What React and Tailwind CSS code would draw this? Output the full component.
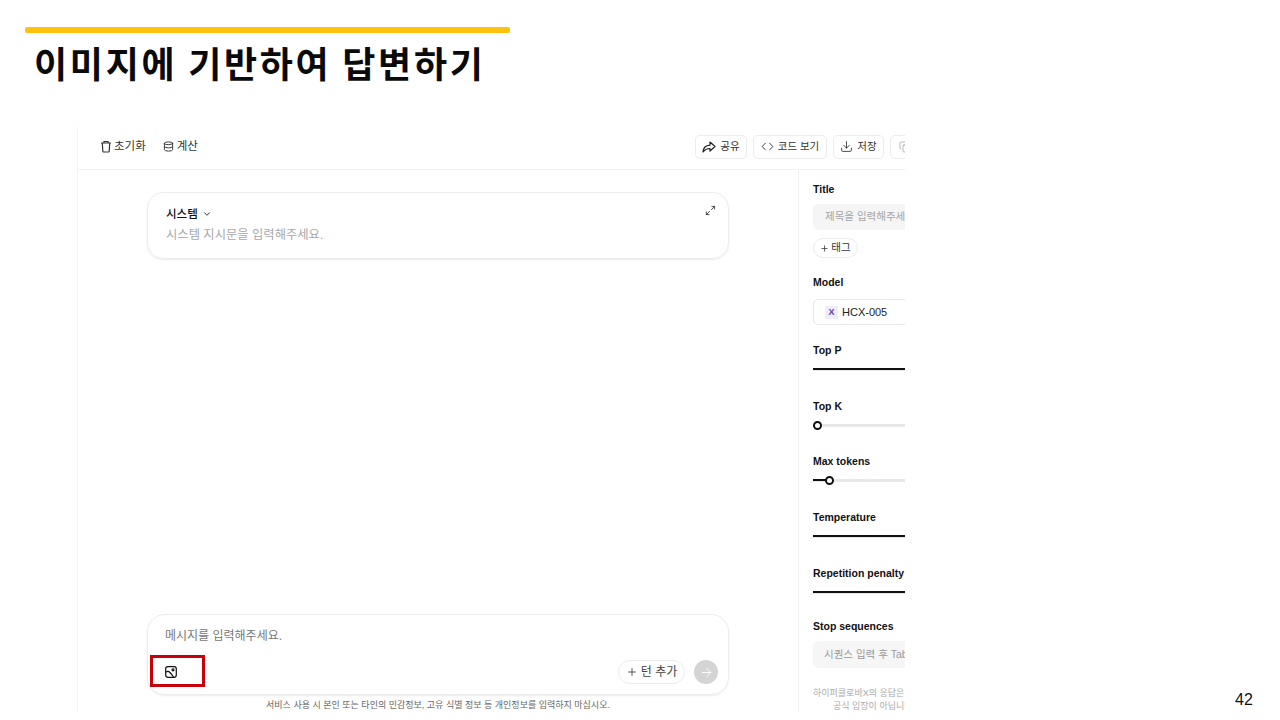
import React from "react";
import { Download, Copy, Code, ChevronDown, Plus, ArrowRight, Database, Maximize2 } from "lucide-react";

const font = { fontFamily: '"Liberation Sans","Noto Sans CJK KR",sans-serif' };

function TrashIcon() {
  return (
    <svg width="12" height="13" viewBox="0 0 12 13" fill="none" stroke="#333" strokeWidth="1.2">
      <path d="M1 3h10M4 3V1.500h4V3M2.300 3l.5 8.200c0 .5.4.8.8.8h4.800c.4 0 .8-.3.8-.8L9.700 3" />
    </svg>
  );
}
function ShareIcon() {
  return (
    <svg width="14" height="12" viewBox="0 0 14 12" fill="none" stroke="#222" strokeWidth="1.2" strokeLinejoin="round">
      <path d="M8 1l5 4.500L8 10V7.500C5 7.300 3 8.500 1 11c.3-4 2.800-6.500 7-6.800z" />
    </svg>
  );
}
function ImageIcon() {
  return (
    <svg width="12" height="12" viewBox="0 0 12 12" fill="none" stroke="#111" strokeWidth="1.2">
      <rect x="0.700" y="0.700" width="10.600" height="10.600" rx="2.200" />
      <path d="M1 6c1.500-1 2.800-.8 4 .5s2.500 3 3.500 4.500" />
      <circle cx="8" cy="3.800" r="1" />
    </svg>
  );
}

function ToolButton({ icon, label, className = "" }) {
  return (
    <div className={`h-[24px] shrink-0 flex items-center justify-center gap-1 rounded-[5px] border border-[#ececec] text-[10.500px] text-[#333] ${className}`}>
      {icon}
      <span>{label}</span>
    </div>
  );
}

function Label({ children }) {
  return <div className="text-[10.500px] leading-[14px] font-bold text-[#111] whitespace-nowrap">{children}</div>;
}

function Slider({ label, fill, thumb, mt }) {
  return (
    <div className={mt}>
      <Label>{label}</Label>
      <div className="relative mt-[6px] h-[12px] w-[250px] flex items-center">
        <div className="h-[3px] w-full bg-[#e8e8e8] rounded-full" />
        {fill != null && <div className="absolute left-0 h-[2px] bg-[#111]" style={{ width: fill }} />}
        {thumb != null && (
          <div className="absolute w-[9px] h-[9px] rounded-full bg-white border-2 border-[#111]" style={{ left: thumb }} />
        )}
      </div>
    </div>
  );
}

export default function App() {
  return (
    <div className="relative w-[1280px] h-[720px] overflow-hidden bg-white flex flex-col" style={font}>
      <div className="ml-[25px] mt-[27px] w-[485px] h-[6px] rounded-[2px] bg-[#fdc20c]" />
      <h1 className="ml-[34px] mt-[4px] h-[50px] text-[36px] leading-[50px] font-bold text-[#0a0a0a] tracking-[2.700px] whitespace-nowrap" style={{ fontFamily: '"Noto Sans CJK KR",sans-serif' }}>
        이미지에 기반하여 답변하기
      </h1>

      <div className="ml-[77px] mt-[40px] w-[828px] h-[585px] overflow-hidden border-l border-[#f3f3f3] flex flex-col">
        <header className="h-[43px] shrink-0 border-b border-[#f2f2f2] flex items-center pl-[22px] pb-[3px]">
          <div className="flex items-center gap-[2px] text-[11.500px] text-[#333]">
            <TrashIcon />
            <span>초기화</span>
          </div>
          <div className="ml-[17px] flex items-center gap-[3px] text-[11.500px] text-[#333]">
            <Database size={11} strokeWidth={1.9} color="#222" />
            <span>계산</span>
          </div>
          <div className="ml-auto flex items-center gap-[6px] -mr-[38px]">
            <ToolButton className="w-[52px]" icon={<ShareIcon />} label="공유" />
            <ToolButton className="w-[74px] gap-[4px]" icon={<Code size={13} strokeWidth={1.6} color="#222" />} label="코드 보기" />
            <ToolButton className="w-[51px]" icon={<Download size={13} strokeWidth={1.5} color="#222" />} label="저장" />
            <ToolButton className="w-[53px]" icon={<Copy size={12} strokeWidth={1.4} color="#999" />} label="복사" />
          </div>
        </header>

        <div className="flex-1 min-h-0 flex">
          <main className="w-[720px] shrink-0 flex flex-col items-center relative">
            <section className="mt-[22px] w-[582px] h-[67px] rounded-[16px] border border-[#ececec] shadow-[0_1px_2px_rgba(0,0,0,0.08)] px-[18px] pt-[13px] relative">
              <div className="flex items-center gap-[4px] text-[11.500px] leading-[16px] font-medium text-[#111]">
                시스템 <ChevronDown size={10} strokeWidth={2} />
              </div>
              <div className="mt-[5px] text-[12.300px] leading-[16px] text-[#a8a8a8]">시스템 지시문을 입력해주세요.</div>
              <Maximize2 size={11} strokeWidth={1.7} color="#222" className="absolute right-[12px] top-[12px]" />
            </section>

            <section className="mt-auto w-[582px] h-[81px] rounded-[18px] border border-[#ececec] shadow-[0_1px_2px_rgba(0,0,0,0.08)] pl-[17px] pr-[10px] pt-[13px] flex flex-col">
              <div className="text-[12px] leading-[17px] text-[#777]">메시지를 입력해주세요.</div>
              <div className="mt-auto mb-[10px] flex items-center">
                <ImageIcon />
                <div className="ml-auto h-[24px] w-[67px] rounded-full border border-[#ececec] flex items-center justify-center gap-[3px] text-[12px] text-[#444]">
                  <Plus size={12} strokeWidth={1.6} color="#333" />
                  <span>턴 추가</span>
                </div>
                <div className="ml-[9px] w-[24px] h-[24px] rounded-full bg-[#d4d4d4] flex items-center justify-center">
                  <ArrowRight size={15} strokeWidth={1.5} color="#fff" />
                </div>
              </div>
            </section>
            <footer className="h-[17px] pt-[3px] text-[9px] leading-[15px] text-[#666] whitespace-nowrap">
              서비스 사용 시 본인 또는 타인의 민감정보, 고유 식별 정보 등 개인정보를 입력하지 마십시오.
            </footer>
          </main>

          <aside className="w-[107px] shrink-0 overflow-hidden border-l border-[#efefef] pl-[14px] pt-[12px]">
            <Label>Title</Label>
            <div className="mt-[8px] h-[26px] w-[250px] rounded-[5px] bg-[#f5f5f5] pl-[12px] flex items-center text-[10.500px] text-[#a5a5a5] whitespace-nowrap">
              제목을 입력해주세요
            </div>
            <div className="mt-[8px] h-[20px] w-[45px] rounded-full border border-[#ececec] flex items-center justify-center gap-[2px] text-[10.500px] text-[#333]">
              <Plus size={9} strokeWidth={2} />
              <span>태그</span>
            </div>
            <div className="mt-[17px]"><Label>Model</Label></div>
            <div className="mt-[10px] h-[26px] w-[250px] rounded-[5px] border border-[#e8e8e8] pl-[11px] pt-[1px] flex items-center gap-[4px] text-[11px] text-[#222]">
              <span className="w-[13px] h-[13px] bg-[#f0edf8] flex items-center justify-center text-[9px] font-bold text-[#5a3fb5]">X</span>
              <span>HCX-005</span>
            </div>

            <Slider label="Top P" fill="100%" mt="mt-[18px]" />
            <Slider label="Top K" thumb={0} mt="mt-[24px]" />
            <Slider label="Max tokens" fill="14px" thumb={12} mt="mt-[23px]" />
            <Slider label="Temperature" fill="100%" mt="mt-[24px]" />
            <Slider label="Repetition penalty" fill="100%" mt="mt-[24px]" />

            <div className="mt-[21px]"><Label>Stop sequences</Label></div>
            <div className="mt-[8px] h-[27px] w-[250px] rounded-[5px] bg-[#f6f6f6] pl-[11px] flex items-center text-[10.500px] text-[#999] whitespace-nowrap">
              시퀀스 입력 후 Tab을 눌러주세요
            </div>
            <div className="mt-[19px] w-[92px] text-[9px] leading-[13px] text-[#aaa] overflow-hidden">
              <div className="whitespace-nowrap">하이퍼클로바X의 응답은</div>
              <div className="whitespace-nowrap pl-[20px]">공식 입장이 아닙니다</div>
            </div>
          </aside>
        </div>
      </div>

      <div className="absolute left-[150px] top-[655px] w-[55px] h-[32px] border-[3px] border-[#c8000a]" />
      <div className="absolute left-[1235px] top-[691px] text-[16px] leading-[18px] text-[#111]">42</div>
    </div>
  );
}
